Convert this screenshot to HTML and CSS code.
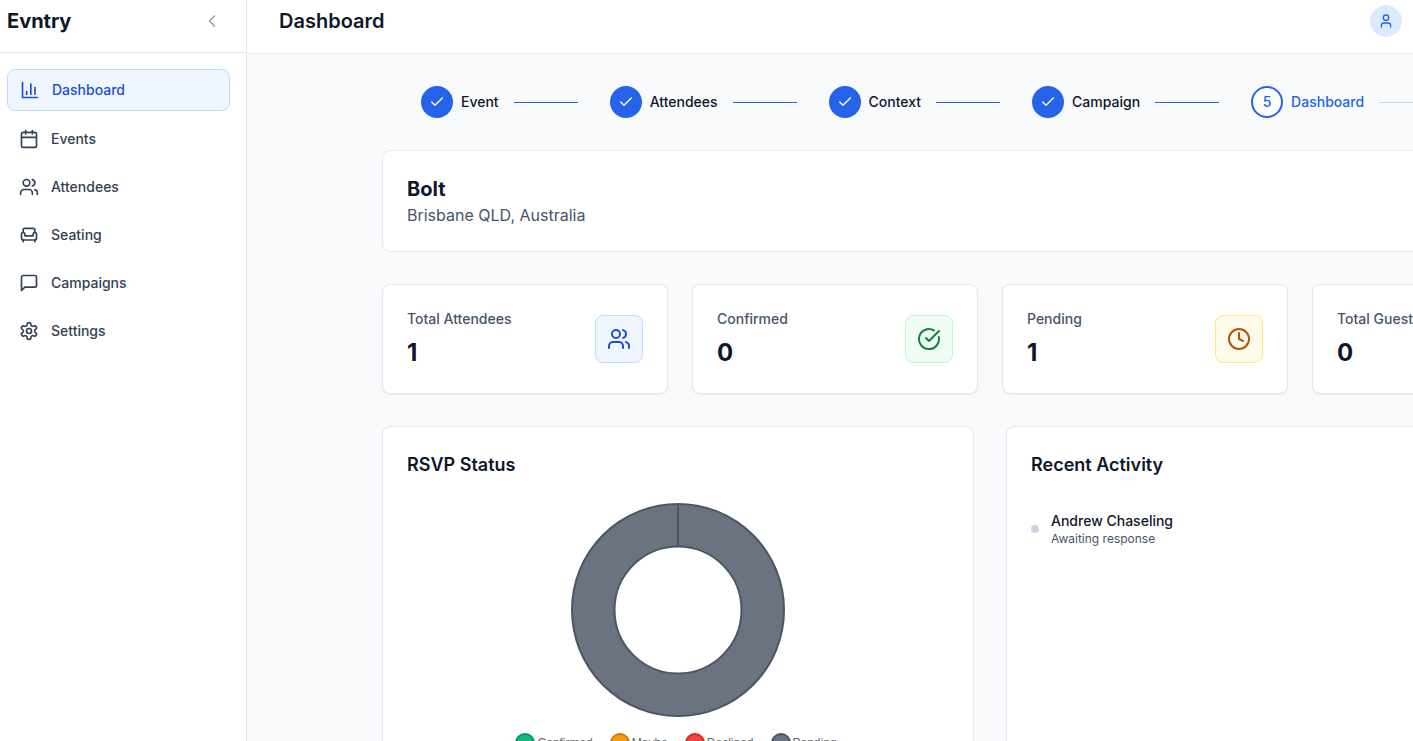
FILE: index.html
```html
<!DOCTYPE html>
<html lang="en">
<head>
<meta charset="utf-8">
<meta name="viewport" content="width=device-width, initial-scale=1">
<title>Evntry – Dashboard</title>
<link rel="stylesheet" href="styles.css">
</head>
<body>
<div class="app">
  <aside class="sidebar">
    <div class="sidebar-head">
      <span class="brand">Evntry</span>
      <button class="collapse" type="button" aria-label="Collapse sidebar">
        <svg class="icon icon-md" viewBox="0 0 24 24"><path d="m15 18-6-6 6-6"/></svg>
      </button>
    </div>
    <nav class="nav">
      <a class="nav-item active" href="#">
        <svg class="icon icon-md" viewBox="0 0 24 24"><path d="M3 3v18h18"/><path d="M13 17V5"/><path d="M18 17V9"/><path d="M8 17v-3"/></svg>
        Dashboard
      </a>
      <a class="nav-item" href="#">
        <svg class="icon icon-md" viewBox="0 0 24 24"><path d="M8 2v4"/><path d="M16 2v4"/><rect width="18" height="18" x="3" y="4" rx="2"/><path d="M3 10h18"/></svg>
        Events
      </a>
      <a class="nav-item" href="#">
        <svg class="icon icon-md" viewBox="0 0 24 24"><path d="M16 21v-2a4 4 0 0 0-4-4H6a4 4 0 0 0-4 4v2"/><circle cx="9" cy="7" r="4"/><path d="M22 21v-2a4 4 0 0 0-3-3.87"/><path d="M16 3.13a4 4 0 0 1 0 7.75"/></svg>
        Attendees
      </a>
      <a class="nav-item" href="#">
        <svg class="icon icon-md" viewBox="0 0 24 24"><path d="M19 9V6a2 2 0 0 0-2-2H7a2 2 0 0 0-2 2v3"/><path d="M3 16a2 2 0 0 0 2 2h14a2 2 0 0 0 2-2v-5a2 2 0 0 0-4 0v1.500a.5.5 0 0 1-.5.5h-9a.5.5 0 0 1-.5-.5V11a2 2 0 0 0-4 0z"/><path d="M5 18v2"/><path d="M19 18v2"/></svg>
        Seating
      </a>
      <a class="nav-item" href="#">
        <svg class="icon icon-md" viewBox="0 0 24 24"><path d="M21 15a2 2 0 0 1-2 2H7l-4 4V5a2 2 0 0 1 2-2h14a2 2 0 0 1 2 2z"/></svg>
        Campaigns
      </a>
      <a class="nav-item" href="#">
        <svg class="icon icon-md" viewBox="0 0 24 24"><path d="M12.220 2h-.44a2 2 0 0 0-2 2v.18a2 2 0 0 1-1 1.730l-.43.25a2 2 0 0 1-2 0l-.15-.08a2 2 0 0 0-2.730.73l-.22.38a2 2 0 0 0 .73 2.730l.15.1a2 2 0 0 1 1 1.720v.51a2 2 0 0 1-1 1.740l-.15.09a2 2 0 0 0-.73 2.730l.22.38a2 2 0 0 0 2.730.73l.15-.08a2 2 0 0 1 2 0l.43.25a2 2 0 0 1 1 1.730V20a2 2 0 0 0 2 2h.44a2 2 0 0 0 2-2v-.18a2 2 0 0 1 1-1.730l.43-.25a2 2 0 0 1 2 0l.15.08a2 2 0 0 0 2.730-.73l.22-.39a2 2 0 0 0-.73-2.730l-.15-.08a2 2 0 0 1-1-1.740v-.5a2 2 0 0 1 1-1.740l.15-.09a2 2 0 0 0 .73-2.730l-.22-.38a2 2 0 0 0-2.730-.73l-.15.08a2 2 0 0 1-2 0l-.43-.25a2 2 0 0 1-1-1.730V4a2 2 0 0 0-2-2z"/><circle cx="12" cy="12" r="3"/></svg>
        Settings
      </a>
    </nav>
  </aside>

  <div class="page">
    <header class="topbar">
      <h1 class="page-title">Dashboard</h1>
      <button class="avatar" type="button" aria-label="Account">
        <svg class="icon icon-sm" viewBox="0 0 24 24"><path d="M19 21v-2a4 4 0 0 0-4-4H9a4 4 0 0 0-4 4v2"/><circle cx="12" cy="7" r="4"/></svg>
      </button>
    </header>

    <main class="main">
      <div class="content">
        <ol class="steps">
          <li class="step done">
            <span class="step-mark"><svg class="icon icon-sm" viewBox="0 0 24 24"><path d="M20 6 9 17l-5-5"/></svg></span>
            <span class="step-name">Event</span><span class="step-line"></span>
          </li>
          <li class="step done">
            <span class="step-mark"><svg class="icon icon-sm" viewBox="0 0 24 24"><path d="M20 6 9 17l-5-5"/></svg></span>
            <span class="step-name">Attendees</span><span class="step-line"></span>
          </li>
          <li class="step done">
            <span class="step-mark"><svg class="icon icon-sm" viewBox="0 0 24 24"><path d="M20 6 9 17l-5-5"/></svg></span>
            <span class="step-name">Context</span><span class="step-line"></span>
          </li>
          <li class="step done">
            <span class="step-mark"><svg class="icon icon-sm" viewBox="0 0 24 24"><path d="M20 6 9 17l-5-5"/></svg></span>
            <span class="step-name">Campaign</span><span class="step-line"></span>
          </li>
          <li class="step current" aria-current="step">
            <span class="step-mark">5</span>
            <span class="step-name">Dashboard</span><span class="step-line"></span>
          </li>
        </ol>

        <section class="card">
          <h2 class="event-name">Bolt</h2>
          <p class="event-place">Brisbane QLD, Australia</p>
        </section>

        <section class="stats">
          <article class="card stat">
            <div class="stat-text"><h3 class="stat-label">Total Attendees</h3><p class="stat-value">1</p></div>
            <span class="stat-icon blue"><svg class="icon icon-lg" viewBox="0 0 24 24"><path d="M16 21v-2a4 4 0 0 0-4-4H6a4 4 0 0 0-4 4v2"/><circle cx="9" cy="7" r="4"/><path d="M22 21v-2a4 4 0 0 0-3-3.870"/><path d="M16 3.130a4 4 0 0 1 0 7.750"/></svg></span>
          </article>
          <article class="card stat">
            <div class="stat-text"><h3 class="stat-label">Confirmed</h3><p class="stat-value">0</p></div>
            <span class="stat-icon green"><svg class="icon icon-lg" viewBox="0 0 24 24"><path d="M21.801 10A10 10 0 1 1 17 3.335"/><path d="m9 11 3 3L22 4"/></svg></span>
          </article>
          <article class="card stat">
            <div class="stat-text"><h3 class="stat-label">Pending</h3><p class="stat-value">1</p></div>
            <span class="stat-icon amber"><svg class="icon icon-lg" viewBox="0 0 24 24"><circle cx="12" cy="12" r="10"/><path d="M12 6v6l4 2"/></svg></span>
          </article>
          <article class="card stat">
            <div class="stat-text"><h3 class="stat-label">Total Guests</h3><p class="stat-value">0</p></div>
          </article>
        </section>

        <section class="panels">
          <article class="card panel">
            <h2 class="panel-title">RSVP Status</h2>
            <div class="chart">
              <svg class="donut" viewBox="0 0 214 214" role="img" aria-label="RSVP status: 1 pending">
                <circle class="ring" cx="107" cy="107" r="85"/>
                <circle class="edge" cx="107" cy="107" r="106"/>
                <circle class="edge" cx="107" cy="107" r="63.500"/>
                <path class="edge" d="M107 1v42"/>
              </svg>
              <ul class="legend">
                <li class="legend-item"><span class="dot confirmed"></span>Confirmed</li>
                <li class="legend-item"><span class="dot maybe"></span>Maybe</li>
                <li class="legend-item"><span class="dot declined"></span>Declined</li>
                <li class="legend-item"><span class="dot pending"></span>Pending</li>
              </ul>
            </div>
          </article>
          <article class="card panel">
            <h2 class="panel-title">Recent Activity</h2>
            <ul class="activity">
              <li class="activity-item">
                <span class="activity-dot"></span>
                <div>
                  <p class="activity-name">Andrew Chaseling</p>
                  <p class="activity-note">Awaiting response</p>
                </div>
              </li>
            </ul>
          </article>
        </section>
      </div>
    </main>
  </div>
</div>
</body>
</html>
```

FILE: styles.css
```css
*, *::before, *::after { box-sizing: border-box; }

body, h1, h2, h3, p, ul, ol { margin: 0; padding: 0; }
ul, ol { list-style: none; }

body {
  font-family: Inter, "Liberation Sans", sans-serif;
  font-size: 14px;
  line-height: 20px;
  color: #0f172a;
  background: #f8fafc;
}

button { padding: 0; border: 0; background: none; font: inherit; cursor: pointer; }

.icon {
  display: block;
  flex: none;
  fill: none;
  stroke: currentColor;
  stroke-width: 2;
  stroke-linecap: round;
  stroke-linejoin: round;
}
.icon-sm { width: 16px; height: 16px; }
.icon-md { width: 20px; height: 20px; }
.icon-lg { width: 24px; height: 24px; }

.app { display: flex; height: 100vh; overflow: hidden; }

/* Sidebar */
.sidebar {
  flex: none;
  width: 247px;
  background: #fff;
  border-right: 1px solid #e2e8f0;
}
.sidebar-head {
  display: flex;
  align-items: center;
  justify-content: space-between;
  padding: 5px 24px 15px 7px;
  border-bottom: 1px solid #e2e8f0;
}
.brand { font-size: 20px; line-height: 32px; font-weight: 700; }
.collapse { color: #94a3b8; }
.nav {
  display: flex;
  flex-direction: column;
  gap: 8px;
  padding: 16px 16px 16px 7px;
}
.nav-item {
  display: flex;
  align-items: center;
  gap: 12px;
  padding: 10px 12px;
  border-radius: 8px;
  font-weight: 500;
  color: #334155;
  text-decoration: none;
}
.nav-item.active { color: #1d4ed8; background: #eff6ff; border: 1px solid #bfdbfe; }

/* Top bar */
.page { flex: 1; min-width: 0; display: flex; flex-direction: column; }
.topbar {
  display: flex;
  align-items: center;
  justify-content: space-between;
  padding: 5px 11px 16px 32px;
  background: #fff;
  border-bottom: 1px solid #e2e8f0;
}
.page-title { font-size: 20px; line-height: 28px; font-weight: 600; }
.avatar {
  display: grid;
  place-items: center;
  width: 32px;
  height: 32px;
  border-radius: 50%;
  color: #2563eb;
  background: #dbeafe;
}

/* Content */
.main { flex: 1; min-height: 0; overflow: hidden; padding: 32px 0 32px 135px; }
.content { display: flex; flex-direction: column; gap: 32px; width: 1216px; }

.steps { display: flex; gap: 32px; padding-left: 39px; }
.step { display: flex; align-items: center; font-weight: 500; }
.step-mark {
  display: grid;
  place-items: center;
  width: 32px;
  height: 32px;
  margin-right: 8px;
  border: 2px solid #2563eb;
  border-radius: 50%;
  color: #2563eb;
  background: #fff;
}
.step-line { width: 64px; height: 1px; margin-left: 15px; background: #2563eb; }
.step.done .step-mark { color: #fff; background: #2563eb; }
.step.current { color: #2563eb; }
.step.current .step-line { background: #cbd5e1; }

.card {
  padding: 24px;
  background: #fff;
  border: 1px solid #e2e8f0;
  border-radius: 8px;
}
.event-name { font-size: 20px; line-height: 28px; font-weight: 700; }
.event-place { font-size: 16px; line-height: 24px; color: #475569; }

.stats { display: grid; grid-template-columns: repeat(4, 1fr); gap: 24px; }
.stat {
  display: flex;
  align-items: center;
  justify-content: space-between;
  box-shadow: 0 1px 2px rgba(0, 0, 0, 0.05);
}
.stat-text { display: flex; flex-direction: column; gap: 8px; }
.stat-label { font-size: 14px; font-weight: 500; color: #475569; }
.stat-value { font-size: 24px; line-height: 32px; font-weight: 700; }
.stat-icon {
  display: grid;
  place-items: center;
  width: 48px;
  height: 48px;
  border: 1px solid;
  border-radius: 8px;
}
.stat-icon.blue { color: #1d4ed8; background: #eff6ff; border-color: #bfdbfe; }
.stat-icon.green { color: #15803d; background: #f0fdf4; border-color: #bbf7d0; }
.stat-icon.amber { color: #b45309; background: #fffbeb; border-color: #fde68a; }

.panels { display: grid; grid-template-columns: repeat(2, 1fr); gap: 32px; }
.panel { display: flex; flex-direction: column; gap: 24px; }
.panel-title { font-size: 18px; line-height: 28px; font-weight: 600; }

.chart { display: flex; flex-direction: column; align-items: center; gap: 16px; }
.donut { display: block; width: 214px; height: 214px; }
.ring { fill: none; stroke: #6b7280; stroke-width: 42; }
.edge { fill: none; stroke: #4b5563; stroke-width: 2; }
.legend {
  display: flex;
  gap: 17px;
  padding-right: 4px;
  font-family: "Liberation Sans", sans-serif;
  font-size: 12px;
  color: #666;
}
.legend-item { display: flex; align-items: center; gap: 2px; }
.dot { width: 20px; height: 20px; border: 2px solid; border-radius: 50%; }
.dot.confirmed { background: #10b981; border-color: #059669; }
.dot.maybe { background: #f59e0b; border-color: #d97706; }
.dot.declined { background: #ef4444; border-color: #dc2626; }
.dot.pending { background: #6b7280; border-color: #4b5563; }

.activity-item { display: flex; align-items: center; gap: 12px; padding: 8px 0; }
.activity-dot { width: 8px; height: 8px; border-radius: 50%; background: #cbd5e1; }
.activity-name { font-weight: 500; }
.activity-note { font-size: 12px; line-height: 16px; color: #475569; }
```
